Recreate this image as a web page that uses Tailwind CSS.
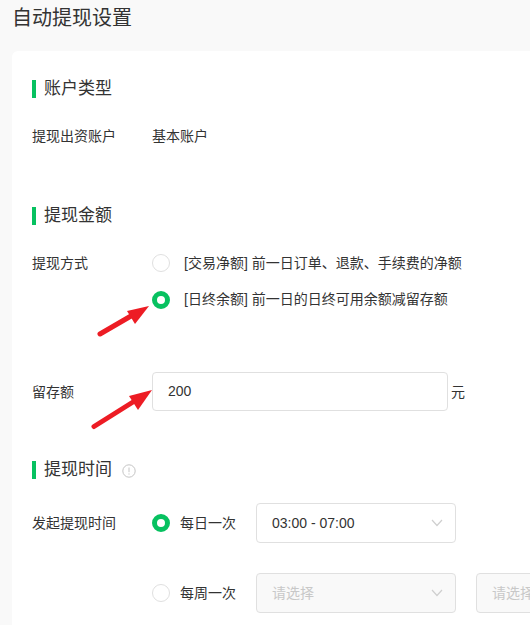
<!DOCTYPE html>
<html lang="zh-CN">
<head>
    <meta charset="UTF-8">
    <title>自动提现设置</title>
    <script src="https://cdn.jsdelivr.net/npm/@tailwindcss/browser@4"></script>
</head>
<body class="bg-[#f9f9f9] font-['Liberation_Sans','Noto_Sans_CJK_SC',sans-serif] text-[#333] text-sm h-[625px] w-[530px] overflow-hidden relative">
    <h1 class="h-[51px] pl-3 pt-[6px] text-[20px] leading-6 font-normal">自动提现设置</h1>

    <div class="ml-3 w-[518px] h-[574px] overflow-hidden bg-white rounded-tl-md pl-5 pt-[29px]">
        <!-- 账户类型 -->
        <div class="flex items-center h-[18px]">
            <span class="w-1 h-[18px] bg-[#07c160]"></span>
            <span class="ml-2 text-[17px]">账户类型</span>
        </div>
        <div class="flex items-center h-5 mt-7">
            <span class="w-[120px]">提现出资账户</span>
            <span>基本账户</span>
        </div>

        <!-- 提现金额 -->
        <div class="flex items-center h-[18px] mt-[61px]">
            <span class="w-1 h-[18px] bg-[#07c160]"></span>
            <span class="ml-2 text-[17px]">提现金额</span>
        </div>
        <div class="flex items-center h-[18px] mt-[29px]">
            <span class="w-[120px]">提现方式</span>
            <span class="w-[18px] h-[18px] rounded-full border border-[#e0e0e0]"></span>
            <span class="ml-[14px]">[交易净额] 前一日订单、退款、手续费的净额</span>
        </div>
        <div class="flex items-center h-[18px] mt-[19px] pl-[120px]">
            <span class="w-[18px] h-[18px] rounded-full border-[5px] border-[#07c160]"></span>
            <span class="ml-[14px] -mt-[2px]">[日终余额] 前一日的日终可用余额减留存额</span>
        </div>
        <div class="flex items-center h-[39px] mt-[63px]">
            <span class="w-[120px]">留存额</span>
            <div class="w-[296px] h-[39px] border border-[#e0e0e0] rounded flex items-center pl-[15px] pb-px">200</div>
            <span class="ml-[3px]">元</span>
        </div>

        <!-- 提现时间 -->
        <div class="flex items-center h-[18px] mt-[50px]">
            <span class="w-1 h-[18px] bg-[#07c160]"></span>
            <span class="ml-2 text-[17px]">提现时间</span>
            <svg class="ml-[10px] mt-px" width="14" height="14" viewBox="0 0 14 14" fill="none" stroke="#c4c4c4">
                <circle cx="7" cy="7" r="6.2" />
                <path d="M7 3.500V8.200M7 9.400v1.200" />
            </svg>
        </div>
        <div class="flex items-center h-10 mt-6">
            <span class="w-[120px] shrink-0">发起提现时间</span>
            <span class="w-[18px] h-[18px] shrink-0 rounded-full border-[5px] border-[#07c160]"></span>
            <span class="ml-[10px] w-[76px] shrink-0">每日一次</span>
            <div class="w-[200px] h-10 shrink-0 border border-[#e0e0e0] rounded flex items-center justify-between pl-[15px] pr-3">
                03:00 - 07:00
                <svg width="12" height="8" viewBox="0 0 12 8" fill="none" stroke="#cfcfcf" stroke-width="1.2"><path d="M1 1l5 5.500L11 1" /></svg>
            </div>
        </div>
        <div class="flex items-center h-10 mt-[30px] pl-[120px]">
            <span class="w-[18px] h-[18px] shrink-0 rounded-full border border-[#e0e0e0]"></span>
            <span class="ml-[10px] w-[76px] shrink-0">每周一次</span>
            <div class="w-[200px] h-10 shrink-0 border border-[#e0e0e0] bg-[#f9f9f9] text-[#c8c8c8] rounded flex items-center justify-between pl-[15px] pr-3">
                请选择
                <svg width="12" height="8" viewBox="0 0 12 8" fill="none" stroke="#cfcfcf" stroke-width="1.2"><path d="M1 1l5 5.500L11 1" /></svg>
            </div>
            <div class="ml-5 w-[200px] h-10 shrink-0 border border-[#e0e0e0] bg-[#f9f9f9] text-[#c8c8c8] rounded flex items-center pl-[15px]">请选择</div>
        </div>
    </div>

    <!-- annotation arrows drawn over the screenshot -->
    <svg class="absolute left-0 top-0 pointer-events-none" width="530" height="625" viewBox="0 0 530 625" fill="#ed1c24">
        <path d="M100 334L131 316" stroke="#ed1c24" stroke-width="5" stroke-linecap="round" />
        <path d="M149 306L135 324L127 311Z" />
        <path d="M94 426.500L133 402" stroke="#ed1c24" stroke-width="5" stroke-linecap="round" />
        <path d="M152 390L138 410L129 396Z" />
    </svg>
</body>
</html>
